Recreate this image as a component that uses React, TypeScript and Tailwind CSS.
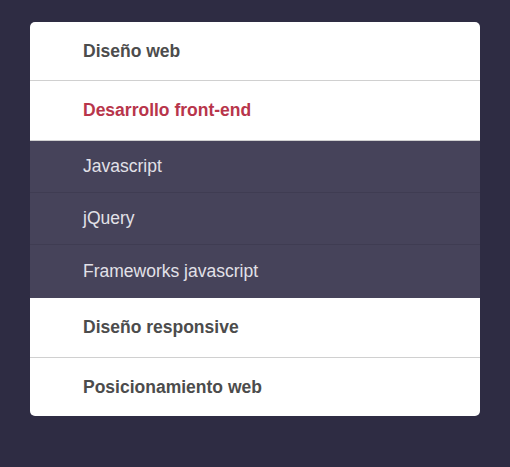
const topItems = ['Diseño web', 'Desarrollo front-end'];
const subItems = ['Javascript', 'jQuery', 'Frameworks javascript'];
const bottomItems = ['Diseño responsive', 'Posicionamiento web'];

const font = { fontFamily: '"Liberation Sans", Arial, sans-serif' };

const App: React.FC = () => {
    return (
        <div className="min-h-screen w-full bg-[#2e2c43] pt-[22px] px-[30px]" style={font}>
            <ul className="w-[450px] bg-white rounded-[5px] overflow-hidden">
                {topItems.map((item, i) => (
                    <li
                        key={item}
                        className={`h-[59px] flex items-center pl-[53px] text-[17.5px] font-bold border-b border-[#d0d0d0] ${i === 1 ? 'text-[#b8354b] h-[60px]' : 'text-[#4c4c4c]'}`}
                    >
                        {item}
                    </li>
                ))}
                <li>
                    <ul className="bg-[#46435a]">
                        {subItems.map((item, i) => (
                            <li
                                key={item}
                                className={`h-[52px] flex items-center pl-[53px] text-[17.5px] text-[#e2e1e8] ${i < subItems.length - 1 ? 'border-b border-[#3f3c52]' : 'h-[53px]'}`}
                            >
                                {item}
                            </li>
                        ))}
                    </ul>
                </li>
                {bottomItems.map((item, i) => (
                    <li
                        key={item}
                        className={`flex items-center pl-[53px] text-[17.5px] font-bold text-[#4c4c4c] ${i === 0 ? 'h-[60px] border-b border-[#d0d0d0]' : 'h-[58px]'}`}
                    >
                        {item}
                    </li>
                ))}
            </ul>
        </div>
    );
};

export default App;
